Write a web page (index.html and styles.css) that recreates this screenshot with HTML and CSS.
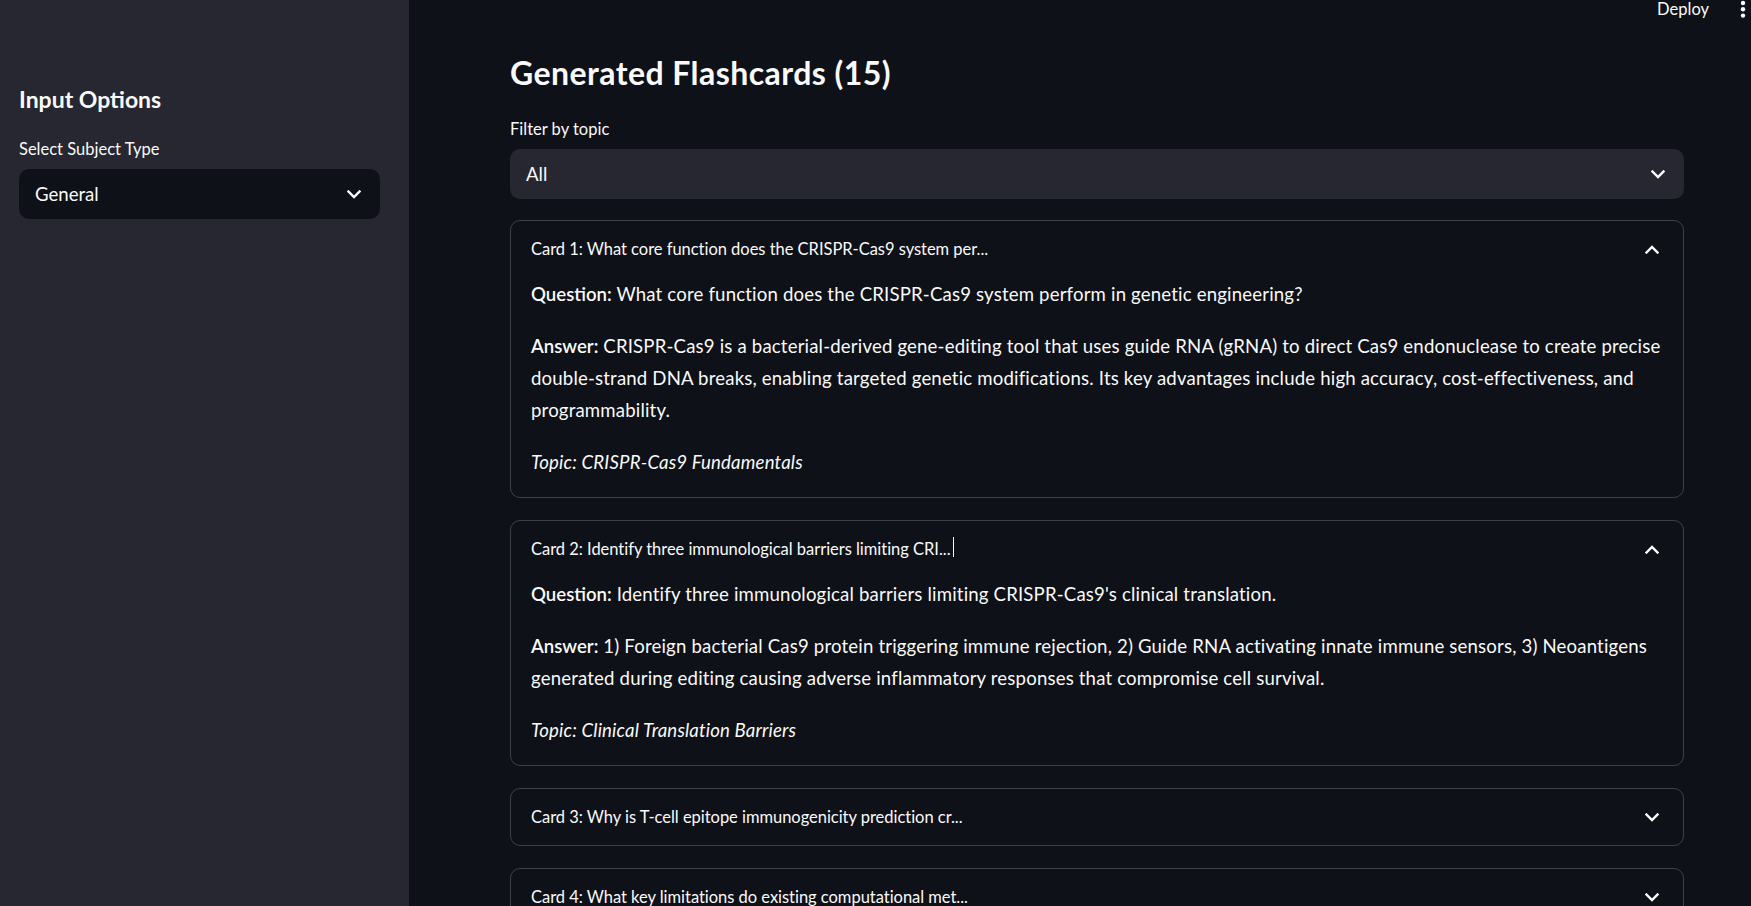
FILE: index.html
```html
<!DOCTYPE html>
<html lang="en">
<head>
<meta charset="utf-8">
<title>Flashcards</title>
<link rel="stylesheet" href="styles.css">
</head>
<body>
<div class="app">
  <aside class="sidebar">
    <h2 class="side-title">Input Options</h2>
    <label class="field-label">Select Subject Type</label>
    <div class="select select-dark">
      <span>General</span>
      <svg class="chev" width="14" height="9" viewBox="0 0 14 9"><path d="M1.5 1.5 L7 7 L12.5 1.5" /></svg>
    </div>
  </aside>
  <main class="main">
    <div class="topbar">
      <span class="deploy">Deploy</span>
      <svg class="kebab" width="6" height="20" viewBox="0 0 6 20"><circle cx="3" cy="3" r="2.2"/><circle cx="3" cy="9.3" r="2.2"/><circle cx="3" cy="15.6" r="2.2"/></svg>
    </div>
    <div class="content">
      <h3 class="title">Generated Flashcards (15)</h3>
      <label class="field-label">Filter by topic</label>
      <div class="select select-light">
        <span>All</span>
        <svg class="chev" width="14" height="9" viewBox="0 0 14 9"><path d="M1.5 1.5 L7 7 L12.5 1.5" /></svg>
      </div>
      <div class="cards">
        <section class="card">
          <div class="card-head">
            <span>Card 1: What core function does the CRISPR-Cas9 system per...</span>
            <svg class="chev" width="14" height="9" viewBox="0 0 14 9"><path d="M1.5 7.5 L7 2 L12.5 7.5" /></svg>
          </div>
          <div class="card-body">
            <p><strong>Question:</strong> What core function does the CRISPR-Cas9 system perform in genetic engineering?</p>
            <p><strong>Answer:</strong> CRISPR-Cas9 is a bacterial-derived gene-editing tool that uses guide RNA (gRNA) to direct Cas9 endonuclease to create precise double-strand DNA breaks, enabling targeted genetic modifications. Its key advantages include high accuracy, cost-effectiveness, and programmability.</p>
            <p><em>Topic: CRISPR-Cas9 Fundamentals</em></p>
          </div>
        </section>
        <section class="card">
          <div class="card-head">
            <span class="head-text">Card 2: Identify three immunological barriers limiting CRI...<span class="cursor"></span></span>
            <svg class="chev" width="14" height="9" viewBox="0 0 14 9"><path d="M1.5 7.5 L7 2 L12.5 7.5" /></svg>
          </div>
          <div class="card-body">
            <p><strong>Question:</strong> Identify three immunological barriers limiting CRISPR-Cas9's clinical translation.</p>
            <p><strong>Answer:</strong> 1) Foreign bacterial Cas9 protein triggering immune rejection, 2) Guide RNA activating innate immune sensors, 3) Neoantigens generated during editing causing adverse inflammatory responses that compromise cell survival.</p>
            <p><em>Topic: Clinical Translation Barriers</em></p>
          </div>
        </section>
        <section class="card">
          <div class="card-head">
            <span>Card 3: Why is T-cell epitope immunogenicity prediction cr...</span>
            <svg class="chev" width="14" height="9" viewBox="0 0 14 9"><path d="M1.5 1.5 L7 7 L12.5 1.5" /></svg>
          </div>
        </section>
        <section class="card">
          <div class="card-head">
            <span>Card 4: What key limitations do existing computational met...</span>
            <svg class="chev" width="14" height="9" viewBox="0 0 14 9"><path d="M1.5 1.5 L7 7 L12.5 1.5" /></svg>
          </div>
        </section>
      </div>
    </div>
  </main>
</div>
</body>
</html>
```

FILE: styles.css
```css
* { box-sizing: border-box; }
html, body { margin: 0; height: 100%; }
body {
  background: #0e1117;
  color: #fafafa;
  font-family: Lato, "Liberation Sans", sans-serif;
  overflow: hidden;
}
.app { display: flex; height: 906px; }

.sidebar {
  width: 409px;
  flex: none;
  background: #262730;
  padding: 84px 29px 0 19px;
}
.side-title {
  margin: 0;
  font-size: 23px;
  line-height: 30px;
  font-weight: 700;
}
.field-label {
  display: block;
  font-size: 16.5px;
  line-height: 22px;
}
.sidebar .field-label { margin-top: 24px; }

.select {
  height: 50px;
  margin-top: 9px;
  border-radius: 10px;
  display: flex;
  align-items: center;
  justify-content: space-between;
  padding: 0 19px 0 16px;
  font-size: 18.6px;
}
.select-dark { background: #0e1117; }
.select-light { background: #262730; }

.chev { display: block; }
.chev path {
  fill: none;
  stroke: #fafafa;
  stroke-width: 2.4;
  stroke-linecap: square;
  stroke-linejoin: miter;
}

.main {
  flex: 1;
  position: relative;
  padding: 51px 0 0 101px;
}
.topbar {
  position: absolute;
  top: 0;
  right: 0;
  display: flex;
  align-items: flex-start;
  gap: 31px;
  padding-right: 5px;
}
.deploy {
  font-size: 16.5px;
  line-height: 18px;
  display: block;
}
.kebab { display: block; }
.kebab circle { fill: #fafafa; }

.content { width: 1174px; }
.title {
  margin: 0;
  font-size: 32px;
  line-height: 44px;
  font-weight: 700;
  letter-spacing: 0.45px;
}
.content .field-label { margin-top: 23px; }

.cards {
  margin-top: 21px;
  display: flex;
  flex-direction: column;
  gap: 22px;
}
.card {
  border: 1px solid rgba(250, 250, 250, 0.2);
  border-radius: 10px;
}
.card-head {
  height: 56px;
  display: flex;
  align-items: center;
  justify-content: space-between;
  padding: 0 24px 0 20px;
  font-size: 16.5px;
  letter-spacing: -0.03px;
}
.head-text { position: relative; }
.cursor {
  position: absolute;
  right: -3px;
  top: -2px;
  width: 1px;
  height: 20px;
  background: #fafafa;
}
.card-body {
  padding: 1px 0 19px 20px;
  font-size: 18.6px;
  line-height: 32px;
  letter-spacing: 0.17px;
}
.card-body p { margin: 0 0 20px; }
.card-body p:last-child { margin-bottom: 0; }
.card-body strong { font-weight: 600; letter-spacing: 0; }
```
